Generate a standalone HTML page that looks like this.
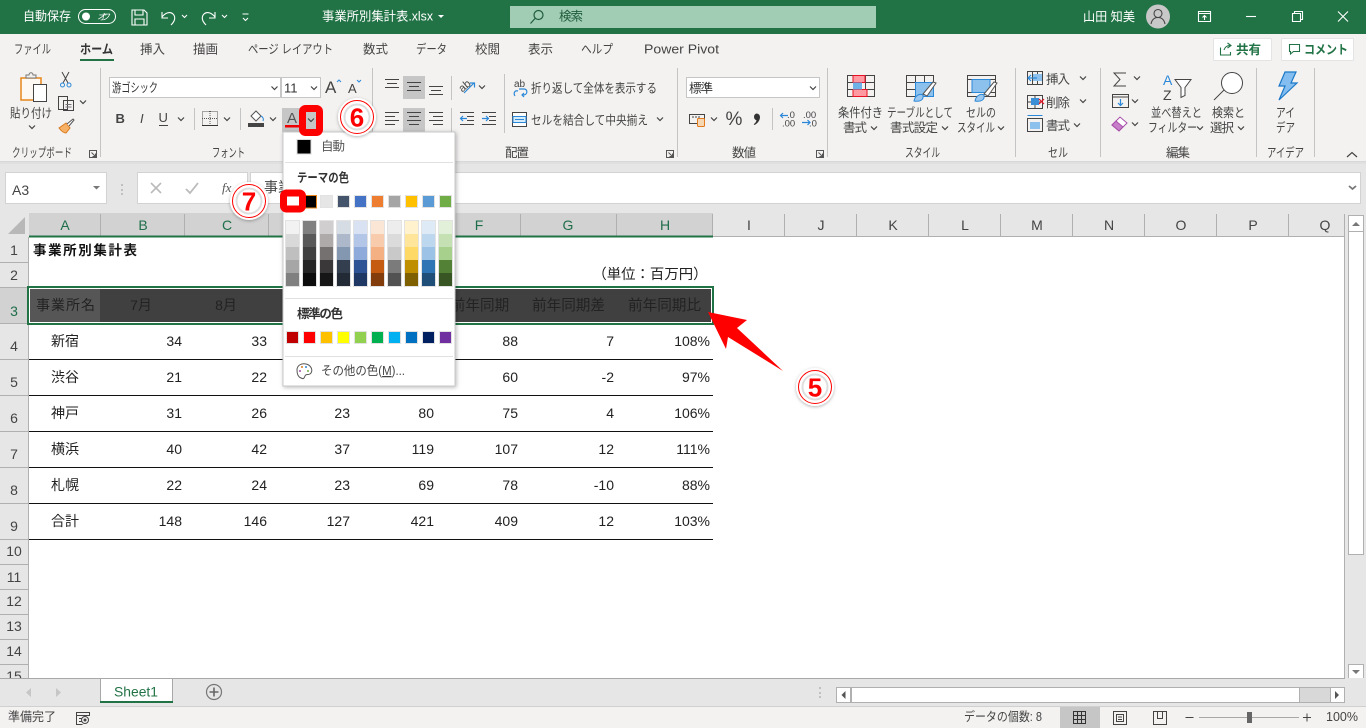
<!DOCTYPE html>
<html lang="ja"><head><meta charset="utf-8"><title>Excel</title>
<style>
html,body{margin:0;padding:0;background:#fff;overflow:hidden}
svg{display:block}
text{font-family:"Liberation Sans","Noto Sans CJK JP",sans-serif;font-size:12.5px;fill:#444}
.w text,text.w{fill:#fff}
.m{text-anchor:middle}
.e{text-anchor:end}
.c text{font-size:14px;fill:#222}
.hg text{fill:#1f6e4a;font-size:14px;text-anchor:middle}
.hn text{fill:#444;font-size:14px;text-anchor:middle}
.s{fill:none;stroke:#444;stroke-width:1}
.b{fill:none;stroke:#2b88d8;stroke-width:1.2}
.sw rect{stroke:#e2e2e2;stroke-width:1}
.d text{font-size:9.5px;fill:#444}
.n{font-size:26px;fill:#f00;font-weight:bold;text-anchor:middle}
</style></head><body>
<svg width="1366" height="728" viewBox="0 0 1366 728" xmlns="http://www.w3.org/2000/svg">
<defs><path id="ch" d="M-3-1.5 0 1.500 3-1.500" fill="none" stroke="#444" stroke-width="1.2"/>
<path id="dl" d="M.5.5h7v7h-7zM2.5 2.500l4 4M3.500 6.500h3v-3" fill="none" stroke="#555" stroke-width="1"/>
<filter id="sh" x="-10%" y="-10%" width="120%" height="120%"><feDropShadow dx="1" dy="1" stdDeviation="2" flood-color="#000" flood-opacity=".28"/></filter>
<filter id="sc" x="-30%" y="-30%" width="160%" height="160%"><feDropShadow dx="0" dy="1" stdDeviation="1.500" flood-color="#000" flood-opacity=".3"/></filter></defs>

<!-- backgrounds -->
<rect width="1366" height="728" fill="#e6e6e6"/>
<rect width="1366" height="34" fill="#217346"/>
<rect y="34" width="1366" height="127" fill="#f3f2f1"/>
<rect y="161" width="1366" height="1" fill="#d8d8d8"/>
<rect y="162" width="1366" height="2" fill="#e0e0e0"/>

<!-- title bar -->
<g class="w">
<text x="23" y="20.500" textLength="48" lengthAdjust="spacingAndGlyphs">自動保存</text>
<rect x="78.500" y="9.500" width="37" height="14" rx="7" fill="none" stroke="#fff"/>
<circle cx="86" cy="16.500" r="4" fill="#fff"/>
<text x="97" y="20" font-style="italic" style="font-size:9px" textLength="13">オフ</text>
<text x="322" y="20.500" textLength="111" lengthAdjust="spacingAndGlyphs">事業所別集計表.xlsx</text>
<text x="1083" y="21" textLength="52" lengthAdjust="spacingAndGlyphs">山田 知美</text>
</g>
<g fill="none" stroke="#fff" stroke-width="1.100">
<path d="M132 10h12l3 3v12h-15zM135 10v5h8v-5M135 25v-6h9v6"/>
<path d="M162 12v6h6M162 17c3-4 8-6 11-3 3 3 2 7-2 11"/>
<path d="M215 12v6h-6M215 17c-3-4-8-6-11-3-3 3-2 7 2 11"/>
<path d="M182 15l2.500 2.500 2.500-2.500M222 15l2.500 2.500 2.500-2.500M243 18l2.500 2.500 2.500-2.500M242.500 14h6"/>
</g>
<path d="M438 15h6l-3 3z" fill="#fff"/>
<rect x="510" y="6" width="366" height="22" fill="#a0cdb3"/>
<g fill="none" stroke="#1f5c3c" stroke-width="1.200"><circle cx="538.500" cy="15" r="4.500"/><path d="M535 18.500l-4.500 5"/></g>
<text x="559" y="20.500" style="fill:#1f5c3c" textLength="24">検索</text>
<circle cx="1158" cy="16.500" r="12" fill="#c8c8c8"/>
<g fill="none" stroke="#444" stroke-width="1.100"><circle cx="1158" cy="13.500" r="4"/><path d="M1151 24c1-5 4-6.500 7-6.500s6 1.500 7 6.500"/></g>
<g fill="none" stroke="#fff" stroke-width="1.100">
<path d="M1198.500 11.500h12v10h-12zM1198.500 13.500h12M1204.500 20v-4M1202.500 17.500l2-2 2 2"/>
<path d="M1246 16.500h10"/>
<path d="M1292.500 13.500h8v8h-8zM1294.500 13.500v-2h8v8h-2"/>
<path d="M1338 11.500l10 10M1348 11.500l-10 10"/>
</g>

<!-- tabs -->
<g>
<text x="14" y="53.500" textLength="37" lengthAdjust="spacingAndGlyphs">ファイル</text>
<text x="80" y="53.500" textLength="33" lengthAdjust="spacingAndGlyphs" font-weight="bold" style="fill:#333">ホーム</text>
<rect x="80" y="59" width="34" height="2" fill="#217346"/>
<text x="140" y="53.500" textLength="25">挿入</text>
<text x="193" y="53.500" textLength="25">描画</text>
<text x="248" y="53.500" textLength="85" lengthAdjust="spacingAndGlyphs">ページ レイアウト</text>
<text x="363" y="53.500" textLength="25">数式</text>
<text x="416" y="53.500" textLength="31" lengthAdjust="spacingAndGlyphs">データ</text>
<text x="475" y="53.500" textLength="25">校閲</text>
<text x="528" y="53.500" textLength="25">表示</text>
<text x="581" y="53.500" textLength="32" lengthAdjust="spacingAndGlyphs">ヘルプ</text>
<text x="644" y="53.500" textLength="75" lengthAdjust="spacingAndGlyphs">Power Pivot</text>
</g>
<rect x="1213.500" y="38.500" width="58" height="22" rx="1" fill="#fff" stroke="#e4e4e4"/>
<path d="M1220.500 47.500v7.500h10v-3M1224 50c1-3 3-4.500 6-4.500M1227.500 43l3.500 2.500-3.500 2.500" fill="none" stroke="#217346" stroke-width="1.100"/>
<text x="1236" y="54" font-weight="bold" style="fill:#217346" textLength="25">共有</text>
<rect x="1281.500" y="38.500" width="72" height="22" rx="1" fill="#fff" stroke="#e4e4e4"/>
<path d="M1289.500 44.500h10v7h-6l-3 2.500v-2.500h-1z" fill="none" stroke="#217346" stroke-width="1.100"/>
<text x="1304" y="54" font-weight="bold" style="fill:#217346" textLength="44" lengthAdjust="spacingAndGlyphs">コメント</text>

<!-- group separators -->
<g stroke="#c4c4c4" stroke-width="1">
<path d="M100.500 68v89M372.500 68v89M677.500 68v89M827.500 68v89M1015.500 68v89M1100.500 68v89M1256.500 68v89M1314.500 68v89"/>
<path d="M194.500 108v22M240.500 108v22M451.500 76v24M451.500 108v24M504.500 74v59M772.500 108v22"/>
</g>

<!-- clipboard -->
<path d="M21 78h20v22H21z" fill="#fdf8f2" stroke="#e8861b" stroke-width="1.500"/>
<path d="M26 78v-3h3c0-3 4-3 4 0h3v3z" fill="#f3f2f1" stroke="#777"/>
<rect x="33.500" y="84.500" width="13" height="17" fill="#fff" stroke="#444"/>
<g fill="none" stroke="#444" stroke-width="1"><path d="M62 72l6 11M69 72l-6 11"/></g>
<circle cx="62.500" cy="85" r="2" fill="none" stroke="#2b88d8"/><circle cx="69" cy="85" r="2" fill="none" stroke="#2b88d8"/>
<path d="M58.500 96.500h9v13h-9zM63.500 100.500h10v10h-10z" fill="#f3f2f1" stroke="#444"/>
<path d="M65.500 104.500h6M65.500 107h6" stroke="#777"/>
<use href="#ch" x="83" y="102"/>
<path d="M59 128l7-5 4 5-4 5c-2 0-4-1-7-5z" fill="#f7b166" stroke="#d9791b"/>
<path d="M67 124l6-5 1 1-5 6" fill="#fff" stroke="#555"/>
<text x="10" y="117.500" textLength="42" lengthAdjust="spacingAndGlyphs">貼り付け</text>
<use href="#ch" x="32" y="127"/>
<text x="12" y="157" textLength="60" lengthAdjust="spacingAndGlyphs">クリップボード</text>
<use href="#dl" x="89" y="150"/>

<!-- font -->
<rect x="109.500" y="77.500" width="171" height="20" fill="#fff" stroke="#c6c6c6"/>
<rect x="281.500" y="77.500" width="39" height="20" fill="#fff" stroke="#c6c6c6"/>
<text x="112" y="92" textLength="46" lengthAdjust="spacingAndGlyphs" style="fill:#333">游ゴシック</text>
<use href="#ch" x="274.500" y="88"/>
<text x="284" y="92.500" style="fill:#333;font-size:13px">11</text>
<use href="#ch" x="314" y="88"/>
<text x="325" y="93" style="font-size:17px;fill:#444">A</text><path d="M337 82l2-2 2 2" fill="none" stroke="#2b88d8"/>
<text x="348" y="93" style="font-size:13px;fill:#444">A</text><path d="M357 80l2 2 2-2" fill="none" stroke="#2b88d8"/>
<text x="115.500" y="123" font-weight="bold" style="font-size:13px">B</text>
<text x="140" y="123" font-style="italic" style="font-size:13px">I</text>
<text x="158.500" y="122" style="font-size:13px">U</text><path d="M159 125.500h9" stroke="#444"/>
<use href="#ch" x="181" y="119"/>
<path d="M202.500 111.500h15v14h-15z" fill="none" stroke="#555" stroke-dasharray="1 1"/><path d="M202 125.500h16" stroke="#333"/><path d="M210 111v14M202 118.500h16" stroke="#555" stroke-dasharray="1 1"/>
<use href="#ch" x="227" y="119"/>
<path d="M251 116l5-5 5 5-5 5z" fill="#fff" stroke="#555"/><path d="M261 116c2 1 3 3 2 5" stroke="#2b88d8" fill="none"/>
<rect x="248" y="123" width="16" height="4" fill="#444"/>
<use href="#ch" x="273" y="119"/>
<rect x="282" y="108" width="20" height="24" fill="#c6c6c6"/>
<text x="287" y="123" style="font-size:15px;fill:#555">A</text>
<rect x="285" y="125" width="17" height="2.500" fill="#ee0000"/>
<text x="212" y="157" textLength="33" lengthAdjust="spacingAndGlyphs">フォント</text>

<!-- alignment -->
<rect x="403" y="76" width="22" height="23" fill="#c6c6c6"/>
<rect x="403" y="108" width="22" height="24" fill="#c6c6c6"/>
<g stroke="#444" stroke-width="1.100" fill="none">
<path d="M385 79.500h14M387 83.500h10M385 87.500h14"/>
<path d="M407 82.500h14M409 86.500h10M407 90.500h14"/>
<path d="M429 86.500h14M431 90.500h10M429 94.500h14"/>
<path d="M385 112.500h14M385 116.500h10M385 120.500h14M385 124.500h10"/>
<path d="M407 112.500h14M409 116.500h10M407 120.500h14M409 124.500h10"/>
<path d="M429 112.500h14M433 116.500h10M429 120.500h14M433 124.500h10"/>
<path d="M460 112.500h14M467 116.500h7M467 120.500h7M460 124.500h14"/>
<path d="M482 112.500h14M489 116.500h7M489 120.500h7M482 124.500h14"/>
</g>
<path d="M467 118.500h-6M463 116l-2.500 2.500 2.500 2.500M482 118.500h6M486 116l2.500 2.500-2.500 2.500" class="b"/>
<text x="458" y="89" transform="rotate(-40 465 85)" style="font-size:11px">ab</text>
<path d="M464 93l10-10M470 83h4.500v4.500" class="b"/>
<use href="#ch" x="482" y="87"/>
<text x="514" y="87" style="font-size:10px">ab</text><path d="M515 96c-2-3 0-6 3-5M523 95c5 0 5-6 1-6h-5M524 93l-2 2 2 2" class="b"/>
<text x="531" y="92.500" textLength="126" lengthAdjust="spacingAndGlyphs">折り返して全体を表示する</text>
<path d="M512.500 112.500h14v14h-14z" fill="#fff" stroke="#444"/><path d="M513 116.500h13v6h-13z" fill="#d6ecfa" stroke="#2b88d8"/><path d="M515 119.500h9" stroke="#2b88d8"/>
<text x="531" y="124.500" textLength="117" lengthAdjust="spacingAndGlyphs">セルを結合して中央揃え</text>
<use href="#ch" x="660" y="119"/>
<text x="505" y="157" textLength="24">配置</text>
<use href="#dl" x="666" y="150"/>

<!-- number -->
<rect x="686.500" y="77.500" width="133" height="20" fill="#fff" stroke="#c6c6c6"/>
<text x="689" y="92.500" style="fill:#333" textLength="24">標準</text>
<use href="#ch" x="813" y="88"/>
<path d="M689.500 114.500h15v9h-15z" fill="#f3f2f1" stroke="#444"/><path d="M692 117h2M695 117h2M698 117h2" stroke="#444"/><rect x="697.500" y="118.500" width="7" height="8" rx="1" fill="#f6d7b4" stroke="#e2791a"/>
<use href="#ch" x="714" y="119"/>
<text x="725.500" y="125" style="font-size:19px">%</text>
<path d="M756.500 113.500a3.500 3.500 0 0 1 3.500 3.500c0 3.500-2.500 6.500-5.500 8l-.8-.8c1.500-1 2.500-2.500 2.800-4a3.500 3.500 0 0 1 0-6.700z" fill="#333"/>
<g class="d">
<text x="787" y="118">.0</text><text x="782" y="126.500">.00</text>
<text x="803" y="118">.00</text><text x="809" y="126.500">.0</text>
</g>
<path d="M788 115.500h-7M783 113l-2.500 2.500 2.500 2.500M802 122.500h8M807.500 120l2.500 2.500-2.500 2.500" class="b"/>
<text x="732" y="157" textLength="24">数値</text>
<use href="#dl" x="816" y="150"/>

<!-- styles -->
<g fill="none" stroke="#444">
<path d="M847.500 75.500h27v21h-27zM847.500 82.500h27M847.500 89.500h27M856.500 75.500v21M865.500 75.500v21"/>
</g>
<path d="M853 75.500h12v7h-12zM853 89.500h14v7h-14z" fill="#ff9aa2" stroke="#e81123"/><rect x="853" y="82.500" width="9" height="7" fill="#6fb2e8"/>
<g fill="none" stroke="#444">
<path d="M906.500 75.500h27v21h-27zM906.500 82.500h27M906.500 89.500h27M915.500 75.500v21M924.500 75.500v21"/>
<path d="M967.500 75.500h28v21h-28zM967.500 79.500h28M967.500 92.500h28"/>
</g>
<rect x="915.500" y="82.500" width="18" height="14" fill="#8cc1ee" stroke="#2b88d8"/>
<rect x="972" y="79.500" width="18" height="13" fill="#8cc1ee" stroke="#2b88d8"/>
<path d="M914 101c6 1 10-1 9-6-4-2-8 1-9 6z" fill="#9cc8ef" stroke="#2b88d8"/>
<path d="M923 94l10-12 3 1-9 13z" fill="#fff" stroke="#555"/>
<path d="M975 101c6 1 10-1 9-6-4-2-8 1-9 6z" fill="#9cc8ef" stroke="#2b88d8"/><path d="M984 94l10-12 3 1-9 13z" fill="#fff" stroke="#555"/>
<text x="838" y="117" textLength="45" lengthAdjust="spacingAndGlyphs">条件付き</text>
<text x="843" y="132" textLength="24">書式</text><use href="#ch" x="874" y="128"/>
<text x="887" y="117" textLength="66" lengthAdjust="spacingAndGlyphs">テーブルとして</text>
<text x="890" y="132" textLength="48">書式設定</text><use href="#ch" x="945" y="128"/>
<text x="966" y="117" textLength="30" lengthAdjust="spacingAndGlyphs">セルの</text>
<text x="957" y="132" textLength="38" lengthAdjust="spacingAndGlyphs">スタイル</text><use href="#ch" x="1001" y="128"/>
<text x="905" y="157" textLength="35" lengthAdjust="spacingAndGlyphs">スタイル</text>

<!-- cells -->
<g fill="none" stroke="#444"><path d="M1027.500 71.500h15v13h-15zM1032.500 71.500v13M1037.500 71.500v13M1027.500 78h15"/>
<path d="M1027.500 95.500h15v13h-15zM1027.500 102h15M1035 95.500v13"/>
<path d="M1027.500 118.500h15v13h-15z"/></g>
<rect x="1033" y="74" width="9" height="7" fill="#8cc1ee"/><path d="M1037 78h-9M1031 75l-3 3 3 3" class="b"/>
<rect x="1031" y="98" width="8" height="7" fill="#3a8fd6"/><path d="M1039 99l5 5M1044 99l-5 5" stroke="#e81123" stroke-width="1.200"/>
<rect x="1030" y="122" width="10" height="7" fill="#8cc1ee"/><path d="M1027.500 115.500h15" stroke="#2b88d8"/>
<text x="1046" y="83.500" textLength="24">挿入</text><use href="#ch" x="1083" y="78"/>
<text x="1046" y="107" textLength="24">削除</text><use href="#ch" x="1083" y="101"/>
<text x="1046" y="130" textLength="24">書式</text><use href="#ch" x="1077" y="125"/>
<text x="1048" y="157" textLength="20" lengthAdjust="spacingAndGlyphs">セル</text>

<!-- editing -->
<path d="M1126 73h-12l6 6.500-6 6.500h12" fill="none" stroke="#444"/>
<use href="#ch" x="1137" y="78"/>
<path d="M1112.500 94.500h16v13h-16zM1112.500 97h16" fill="none" stroke="#444"/><path d="M1120.500 99v6M1118 103l2.500 2.500 2.500-2.500" class="b"/>
<use href="#ch" x="1135" y="101"/>
<path d="M1112 125l8-8 7 6-8 8z" fill="#fff" stroke="#a64ea8"/><path d="M1112 125l4-4 7 6-4 4z" fill="#c77fc9" stroke="#a64ea8"/>
<use href="#ch" x="1135" y="124"/>
<text x="1163" y="85" style="font-size:14px;fill:#2b88d8">A</text>
<text x="1163" y="100" style="font-size:14px;fill:#444">Z</text>
<path d="M1175 79.500h16l-6 8v8l-4 2v-10z" fill="#fff" stroke="#444"/>
<text x="1151" y="117" textLength="51" lengthAdjust="spacingAndGlyphs">並べ替えと</text>
<text x="1148" y="132" textLength="49" lengthAdjust="spacingAndGlyphs">フィルター</text><use href="#ch" x="1200" y="128"/>
<circle cx="1232" cy="83" r="10.500" fill="#fff" stroke="#444"/><path d="M1224 90l-10 10" stroke="#444"/>
<text x="1212" y="117" textLength="33" lengthAdjust="spacingAndGlyphs">検索と</text>
<text x="1210" y="132" textLength="24">選択</text><use href="#ch" x="1241" y="128"/>
<text x="1166" y="157" textLength="24">編集</text>

<!-- ideas -->
<path d="M1285 72h11l-5 11h6l-18 17 6-14h-6z" fill="#84bdf0" stroke="#1b78c8" stroke-width="1.200"/>
<text x="1276" y="117" textLength="19" lengthAdjust="spacingAndGlyphs">アイ</text>
<text x="1276" y="132" textLength="19" lengthAdjust="spacingAndGlyphs">デア</text>
<text x="1267" y="157" textLength="37" lengthAdjust="spacingAndGlyphs">アイデア</text>
<path d="M1347 157l5-4.500 5 4.500" fill="none" stroke="#444" stroke-width="1.200"/>

<!-- formula bar -->
<rect x="5.500" y="172.500" width="101" height="31" fill="#fff" stroke="#d2d2d2"/>
<text x="12" y="195" style="font-size:14px">A3</text>
<path d="M93 186h7l-3.500 3.500z" fill="#777"/>
<path d="M122 184v2M122 189v2M122 193v2" stroke="#999"/>
<rect x="137.500" y="172.500" width="110" height="31" fill="#fff" stroke="#d2d2d2"/>
<rect x="250.500" y="172.500" width="1110" height="31" fill="#fff" stroke="#d2d2d2"/>
<path d="M151 183l10 10M161 183l-10 10" stroke="#bbb" stroke-width="1.600"/>
<path d="M186 189l4 4 8-10" fill="none" stroke="#bbb" stroke-width="1.800"/>
<text x="222" y="192" font-style="italic" style="font-family:'Liberation Serif',serif;font-size:13px;fill:#555">fx</text>
<text x="264" y="192" style="fill:#444;font-size:14px">事業所名</text>
<path d="M1349 186l3.500 3 3.500-3" fill="none" stroke="#777" stroke-width="1.800"/>

<!-- sheet -->
<rect x="0" y="213" width="1345" height="465" fill="#fff"/>
<rect x="0" y="213" width="1345" height="24" fill="#e6e6e6"/>
<rect x="0" y="237" width="28" height="441" fill="#e6e6e6"/>
<rect x="29" y="213" width="684" height="24" fill="#d2d2d2"/>
<rect x="0" y="287" width="28" height="37" fill="#d2d2d2"/>
<path d="M8 234l17-17v17z" fill="#b8b8b8"/>
<g stroke="#b0b0b0" stroke-width="1">
<path d="M100.500 214v22M184.500 214v22M268.500 214v22M352.500 214v22M436.500 214v22M520.500 214v22M616.500 214v22M712.500 214v22M784.500 214v22M856.500 214v22M928.500 214v22M1000.500 214v22M1072.500 214v22M1144.500 214v22M1216.500 214v22M1288.500 214v22M1344.500 214v464"/>
<path d="M0 262.500h28M0 287.500h28M0 323.500h28M0 359.500h28M0 395.500h28M0 431.500h28M0 467.500h28M0 503.500h28M0 539.500h28M0 564.500h28M0 589.500h28M0 614.500h28M0 639.500h28M0 664.500h28"/>
<path d="M28.500 237v441M713 236.500h632"/>
</g>
<rect x="29" y="235.500" width="684" height="2" fill="#217346"/>
<g class="hg">
<text x="65" y="230">A</text><text x="143" y="230">B</text><text x="227" y="230">C</text>
<text x="479" y="230">F</text><text x="568" y="230">G</text><text x="665" y="230">H</text>
<text x="14" y="316">3</text>
</g>
<g class="hn">
<text x="749" y="230">I</text><text x="821" y="230">J</text><text x="893" y="230">K</text><text x="965" y="230">L</text><text x="1037" y="230">M</text><text x="1109" y="230">N</text><text x="1181" y="230">O</text><text x="1253" y="230">P</text><text x="1325" y="230">Q</text>
<text x="14" y="255">1</text><text x="14" y="280">2</text><text x="14" y="351">4</text><text x="14" y="387">5</text><text x="14" y="423">6</text><text x="14" y="459">7</text><text x="14" y="495">8</text><text x="14" y="531">9</text>
<text x="14" y="556">10</text><text x="14" y="582">11</text><text x="14" y="606">12</text><text x="14" y="631">13</text><text x="14" y="656">14</text><text x="14" y="681">15</text>
</g>
<!-- row 3 -->
<rect x="29" y="288" width="684" height="35" fill="#404040"/>
<rect x="30" y="289" width="70" height="33" fill="#565656"/>
<rect x="29.500" y="288.500" width="682" height="34" fill="none" stroke="#fff"/>
<rect x="28" y="287" width="685" height="37" fill="none" stroke="#217346" stroke-width="2"/>
<g class="c">
<text x="33" y="255" font-weight="bold" textLength="104" style="fill:#111;font-size:13.500px">事業所別集計表</text>
<text x="707.500" y="279" class="e" style="font-size:14.400px">（単位：百万円）</text>
<text x="36" y="310" textLength="59">事業所名</text>
<text x="141" y="310" class="m">7月</text><text x="226" y="310" class="m">8月</text>
<text x="480" y="310" class="m" style="font-size:14.600px">前年同期</text>
<text x="568.500" y="310" class="m" style="font-size:14.600px">前年同期差</text>
<text x="664.500" y="310" class="m" style="font-size:14.600px">前年同期比</text>

<text x="65" y="346" class="m">新宿</text><text x="182" y="346" class="e">34</text><text x="267" y="346" class="e">33</text><text x="518" y="346" class="e">88</text><text x="614" y="346" class="e">7</text><text x="710" y="346" class="e">108%</text>
<text x="65" y="382" class="m">渋谷</text><text x="182" y="382" class="e">21</text><text x="267" y="382" class="e">22</text><text x="518" y="382" class="e">60</text><text x="614" y="382" class="e">-2</text><text x="710" y="382" class="e">97%</text>
<text x="65" y="418" class="m">神戸</text><text x="182" y="418" class="e">31</text><text x="267" y="418" class="e">26</text><text x="350" y="418" class="e">23</text><text x="434" y="418" class="e">80</text><text x="518" y="418" class="e">75</text><text x="614" y="418" class="e">4</text><text x="710" y="418" class="e">106%</text>
<text x="65" y="454" class="m">横浜</text><text x="182" y="454" class="e">40</text><text x="267" y="454" class="e">42</text><text x="350" y="454" class="e">37</text><text x="434" y="454" class="e">119</text><text x="518" y="454" class="e">107</text><text x="614" y="454" class="e">12</text><text x="710" y="454" class="e">111%</text>
<text x="65" y="490" class="m">札幌</text><text x="182" y="490" class="e">22</text><text x="267" y="490" class="e">24</text><text x="350" y="490" class="e">23</text><text x="434" y="490" class="e">69</text><text x="518" y="490" class="e">78</text><text x="614" y="490" class="e">-10</text><text x="710" y="490" class="e">88%</text>
<text x="65" y="526" class="m">合計</text><text x="182" y="526" class="e">148</text><text x="267" y="526" class="e">146</text><text x="350" y="526" class="e">127</text><text x="434" y="526" class="e">421</text><text x="518" y="526" class="e">409</text><text x="614" y="526" class="e">12</text><text x="710" y="526" class="e">103%</text>
</g>
<path d="M29 359.500h684M29 395.500h684M29 431.500h684M29 467.500h684M29 503.500h684M29 539.500h684" stroke="#111" stroke-width="1"/>

<!-- vertical scrollbar -->
<rect x="1345" y="213" width="21" height="466" fill="#e6e6e6"/>
<rect x="1348.500" y="215.500" width="15" height="16" fill="#fff" stroke="#b0b0b0"/>
<path d="M1352 226l4-4 4 4z" fill="#777"/>
<rect x="1348.500" y="231.500" width="15" height="323" fill="#fff" stroke="#b0b0b0"/>
<rect x="1348.500" y="664.500" width="15" height="15" fill="#fff" stroke="#b0b0b0"/>
<path d="M1352 670h8l-4 4z" fill="#777"/>

<!-- tab bar -->
<rect x="0" y="678" width="1366" height="28" fill="#e6e6e6"/>
<rect x="0" y="678" width="1345" height="1" fill="#a8a8a8"/>
<path d="M31 688v9l-5-4.500zM56 688v9l5-4.500z" fill="#c6c6c6"/>
<rect x="100.500" y="678.500" width="72" height="24" fill="#fff" stroke="#a8a8a8"/>
<rect x="100" y="701" width="73" height="2" fill="#217346"/>
<text x="114" y="696.500" style="font-size:14px;fill:#217346" textLength="44" lengthAdjust="spacingAndGlyphs">Sheet1</text>
<circle cx="214" cy="692" r="7.500" fill="none" stroke="#777" stroke-width="1.200"/><path d="M209.500 692h9M214 687.500v9" stroke="#666" stroke-width="1.600"/>
<path d="M820 687v2M820 692v2M820 696v2" stroke="#999"/>
<rect x="836.500" y="687.500" width="508" height="15" fill="#d8d8d8" stroke="#b0b0b0"/>
<rect x="836.500" y="687.500" width="14" height="15" fill="#fff" stroke="#b0b0b0"/>
<rect x="851.500" y="687.500" width="448" height="15" fill="#fff" stroke="#b0b0b0"/>
<rect x="1330.500" y="687.500" width="14" height="15" fill="#fff" stroke="#b0b0b0"/>
<path d="M845.500 691v8l-4-4zM1335 691v8l4-4z" fill="#555"/>

<!-- status bar -->
<rect x="0" y="706" width="1366" height="22" fill="#f3f2f1"/>
<rect x="0" y="706" width="1366" height="1" fill="#d0d0d0"/>
<text x="8" y="721" textLength="48" lengthAdjust="spacingAndGlyphs">準備完了</text>
<path d="M76.500 712.500h13v3h-13zM76.500 715.500v9h6M79 718.500h4M79 721.500h3" fill="none" stroke="#444"/><circle cx="85" cy="720" r="3.500" fill="#f3f2f1" stroke="#444"/><circle cx="85" cy="720" r="1.500" fill="#444"/>
<text x="964" y="721" textLength="78" lengthAdjust="spacingAndGlyphs">データの個数: 8</text>
<rect x="1060" y="707" width="40" height="21" fill="#c6c6c6"/>
<path d="M1073.500 711.500h12v12h-12zM1077.500 711.500v12M1081.500 711.500v12M1073.500 715.500h12M1073.500 719.500h12" fill="none" stroke="#333"/>
<path d="M1113.500 711.500h13v13h-13zM1116.500 714.500h7v7h-7zM1118 717h4M1118 719.500h4" fill="none" stroke="#444"/>
<path d="M1153.500 711.500h13v13h-13zM1157.500 711.500v7h5v-7" fill="none" stroke="#444"/>
<path d="M1185.500 717.500h8" stroke="#444"/>
<path d="M1199 717.500h100" stroke="#a8a8a8"/>
<rect x="1247" y="712" width="5" height="11" fill="#666"/>
<path d="M1303 717.500h8M1307 713.500v8" stroke="#444"/>
<text x="1358" y="721" class="e">100%</text>

<!-- dropdown -->
<rect x="283" y="132" width="172" height="254" fill="#fff" stroke="#c8c8c8" filter="url(#sh)"/>
<rect x="297" y="139.500" width="14" height="14.500" fill="#000" stroke="#ddd"/>
<text x="321" y="150.500" textLength="24" style="fill:#555">自動</text>
<path d="M285 162.500h168M285 298.500h168M285 356.500h168" stroke="#e1e1e1"/>
<text x="297" y="182" font-weight="bold" textLength="52" lengthAdjust="spacingAndGlyphs" style="fill:#333">テーマの色</text>
<g class="sw">
<rect x="303.500" y="195.500" width="13" height="12.500" fill="#000" style="stroke:#e8861b"/>
<rect x="320.500" y="195.500" width="12" height="12" fill="#e7e6e6"/><rect x="337.500" y="195.500" width="12" height="12" fill="#44546a"/><rect x="354.500" y="195.500" width="12" height="12" fill="#4472c4"/><rect x="371.500" y="195.500" width="12" height="12" fill="#ed7d31"/><rect x="388.500" y="195.500" width="12" height="12" fill="#a5a5a5"/><rect x="405.500" y="195.500" width="12" height="12" fill="#ffc000"/><rect x="422.500" y="195.500" width="12" height="12" fill="#5b9bd5"/><rect x="439.500" y="195.500" width="12" height="12" fill="#70ad47"/>
</g>
<rect x="283.500" y="193" width="19" height="16" rx="3" fill="#fff" stroke="#f00" stroke-width="7"/>
<g>
<rect x="286" y="221" width="13" height="13" fill="#f2f2f2"/><rect x="286" y="234" width="13" height="13" fill="#d9d9d9"/><rect x="286" y="247" width="13" height="13" fill="#bfbfbf"/><rect x="286" y="260" width="13" height="13" fill="#a6a6a6"/><rect x="286" y="273" width="13" height="13" fill="#808080"/>
<rect x="303" y="221" width="13" height="13" fill="#808080"/><rect x="303" y="234" width="13" height="13" fill="#595959"/><rect x="303" y="247" width="13" height="13" fill="#404040"/><rect x="303" y="260" width="13" height="13" fill="#262626"/><rect x="303" y="273" width="13" height="13" fill="#0d0d0d"/>
<rect x="320" y="221" width="13" height="13" fill="#d0cece"/><rect x="320" y="234" width="13" height="13" fill="#aeaaaa"/><rect x="320" y="247" width="13" height="13" fill="#757171"/><rect x="320" y="260" width="13" height="13" fill="#3a3838"/><rect x="320" y="273" width="13" height="13" fill="#171616"/>
<rect x="337" y="221" width="13" height="13" fill="#d6dce4"/><rect x="337" y="234" width="13" height="13" fill="#adb9ca"/><rect x="337" y="247" width="13" height="13" fill="#8497b0"/><rect x="337" y="260" width="13" height="13" fill="#333f4f"/><rect x="337" y="273" width="13" height="13" fill="#222b35"/>
<rect x="354" y="221" width="13" height="13" fill="#d9e2f3"/><rect x="354" y="234" width="13" height="13" fill="#b4c6e7"/><rect x="354" y="247" width="13" height="13" fill="#8eaadb"/><rect x="354" y="260" width="13" height="13" fill="#2f5496"/><rect x="354" y="273" width="13" height="13" fill="#1f3864"/>
<rect x="371" y="221" width="13" height="13" fill="#fbe5d5"/><rect x="371" y="234" width="13" height="13" fill="#f7cbac"/><rect x="371" y="247" width="13" height="13" fill="#f4b083"/><rect x="371" y="260" width="13" height="13" fill="#c55a11"/><rect x="371" y="273" width="13" height="13" fill="#833c0b"/>
<rect x="388" y="221" width="13" height="13" fill="#ededed"/><rect x="388" y="234" width="13" height="13" fill="#dbdbdb"/><rect x="388" y="247" width="13" height="13" fill="#c9c9c9"/><rect x="388" y="260" width="13" height="13" fill="#7b7b7b"/><rect x="388" y="273" width="13" height="13" fill="#525252"/>
<rect x="405" y="221" width="13" height="13" fill="#fff2cc"/><rect x="405" y="234" width="13" height="13" fill="#fee599"/><rect x="405" y="247" width="13" height="13" fill="#ffd965"/><rect x="405" y="260" width="13" height="13" fill="#bf8f00"/><rect x="405" y="273" width="13" height="13" fill="#7f6000"/>
<rect x="422" y="221" width="13" height="13" fill="#deeaf6"/><rect x="422" y="234" width="13" height="13" fill="#bdd7ee"/><rect x="422" y="247" width="13" height="13" fill="#9cc3e5"/><rect x="422" y="260" width="13" height="13" fill="#2e75b5"/><rect x="422" y="273" width="13" height="13" fill="#1f4e79"/>
<rect x="439" y="221" width="13" height="13" fill="#e2efd9"/><rect x="439" y="234" width="13" height="13" fill="#c5e0b3"/><rect x="439" y="247" width="13" height="13" fill="#a8d08d"/><rect x="439" y="260" width="13" height="13" fill="#538135"/><rect x="439" y="273" width="13" height="13" fill="#375623"/>
</g>
<g fill="none" stroke="#e2e2e2"><path d="M285.500 220.500h14v66h-14zM302.500 220.500h14v66h-14zM319.500 220.500h14v66h-14zM336.500 220.500h14v66h-14zM353.500 220.500h14v66h-14zM370.500 220.500h14v66h-14zM387.500 220.500h14v66h-14zM404.500 220.500h14v66h-14zM421.500 220.500h14v66h-14zM438.500 220.500h14v66h-14z"/></g>
<text x="297" y="318" font-weight="bold" textLength="46" style="fill:#333">標準の色</text>
<g class="sw">
<rect x="286.500" y="331.500" width="12" height="12" fill="#c00000"/><rect x="303.500" y="331.500" width="12" height="12" fill="#ff0000"/><rect x="320.500" y="331.500" width="12" height="12" fill="#ffc000"/><rect x="337.500" y="331.500" width="12" height="12" fill="#ffff00"/><rect x="354.500" y="331.500" width="12" height="12" fill="#92d050"/><rect x="371.500" y="331.500" width="12" height="12" fill="#00b050"/><rect x="388.500" y="331.500" width="12" height="12" fill="#00b0f0"/><rect x="405.500" y="331.500" width="12" height="12" fill="#0070c0"/><rect x="422.500" y="331.500" width="12" height="12" fill="#002060"/><rect x="439.500" y="331.500" width="12" height="12" fill="#7030a0"/>
</g>
<path d="M297 370c0-5 5-7 9-6 5 1 7 6 5 9-2 3-5 0-6 3-1 3-2 3-4 2-3-1-4-4-4-8z" fill="#fff" stroke="#555"/>
<circle cx="302" cy="367" r="1" fill="#d9791b"/><circle cx="306" cy="367" r="1" fill="#2b88d8"/><circle cx="308" cy="371" r="1" fill="#70ad47"/><circle cx="300" cy="371" r="1" fill="#a64ea8"/>
<text x="321" y="375" textLength="84" lengthAdjust="spacingAndGlyphs">その他の色(<tspan text-decoration="underline">M</tspan>)...</text>

<!-- callouts -->
<rect x="302.500" y="108.500" width="17" height="24" rx="3" fill="#c6c6c6" stroke="#f00" stroke-width="7"/>
<use href="#ch" x="311" y="120"/>
<polygon points="708,312 747,320 737,328 783,371 728,337 726,349" fill="#f00"/>
<g filter="url(#sc)">
<circle cx="357" cy="117" r="19" fill="#fff"/><circle cx="815" cy="387" r="19" fill="#fff"/><circle cx="249" cy="201" r="19" fill="#fff"/>
</g>
<g fill="none" stroke="#dedede" stroke-width="2"><circle cx="357" cy="117" r="12.500"/><circle cx="815" cy="387" r="12.500"/><circle cx="249" cy="201" r="12.500"/></g>
<g fill="none" stroke="#f00" stroke-width="1"><circle cx="357" cy="117" r="16.500"/><circle cx="815" cy="387" r="16.500"/><circle cx="249" cy="201" r="16.500"/></g>
<text x="357" y="126.500" class="n">6</text>
<text x="815" y="396.500" class="n">5</text>
<text x="249" y="210.500" class="n">7</text>
</svg>
</body></html>
